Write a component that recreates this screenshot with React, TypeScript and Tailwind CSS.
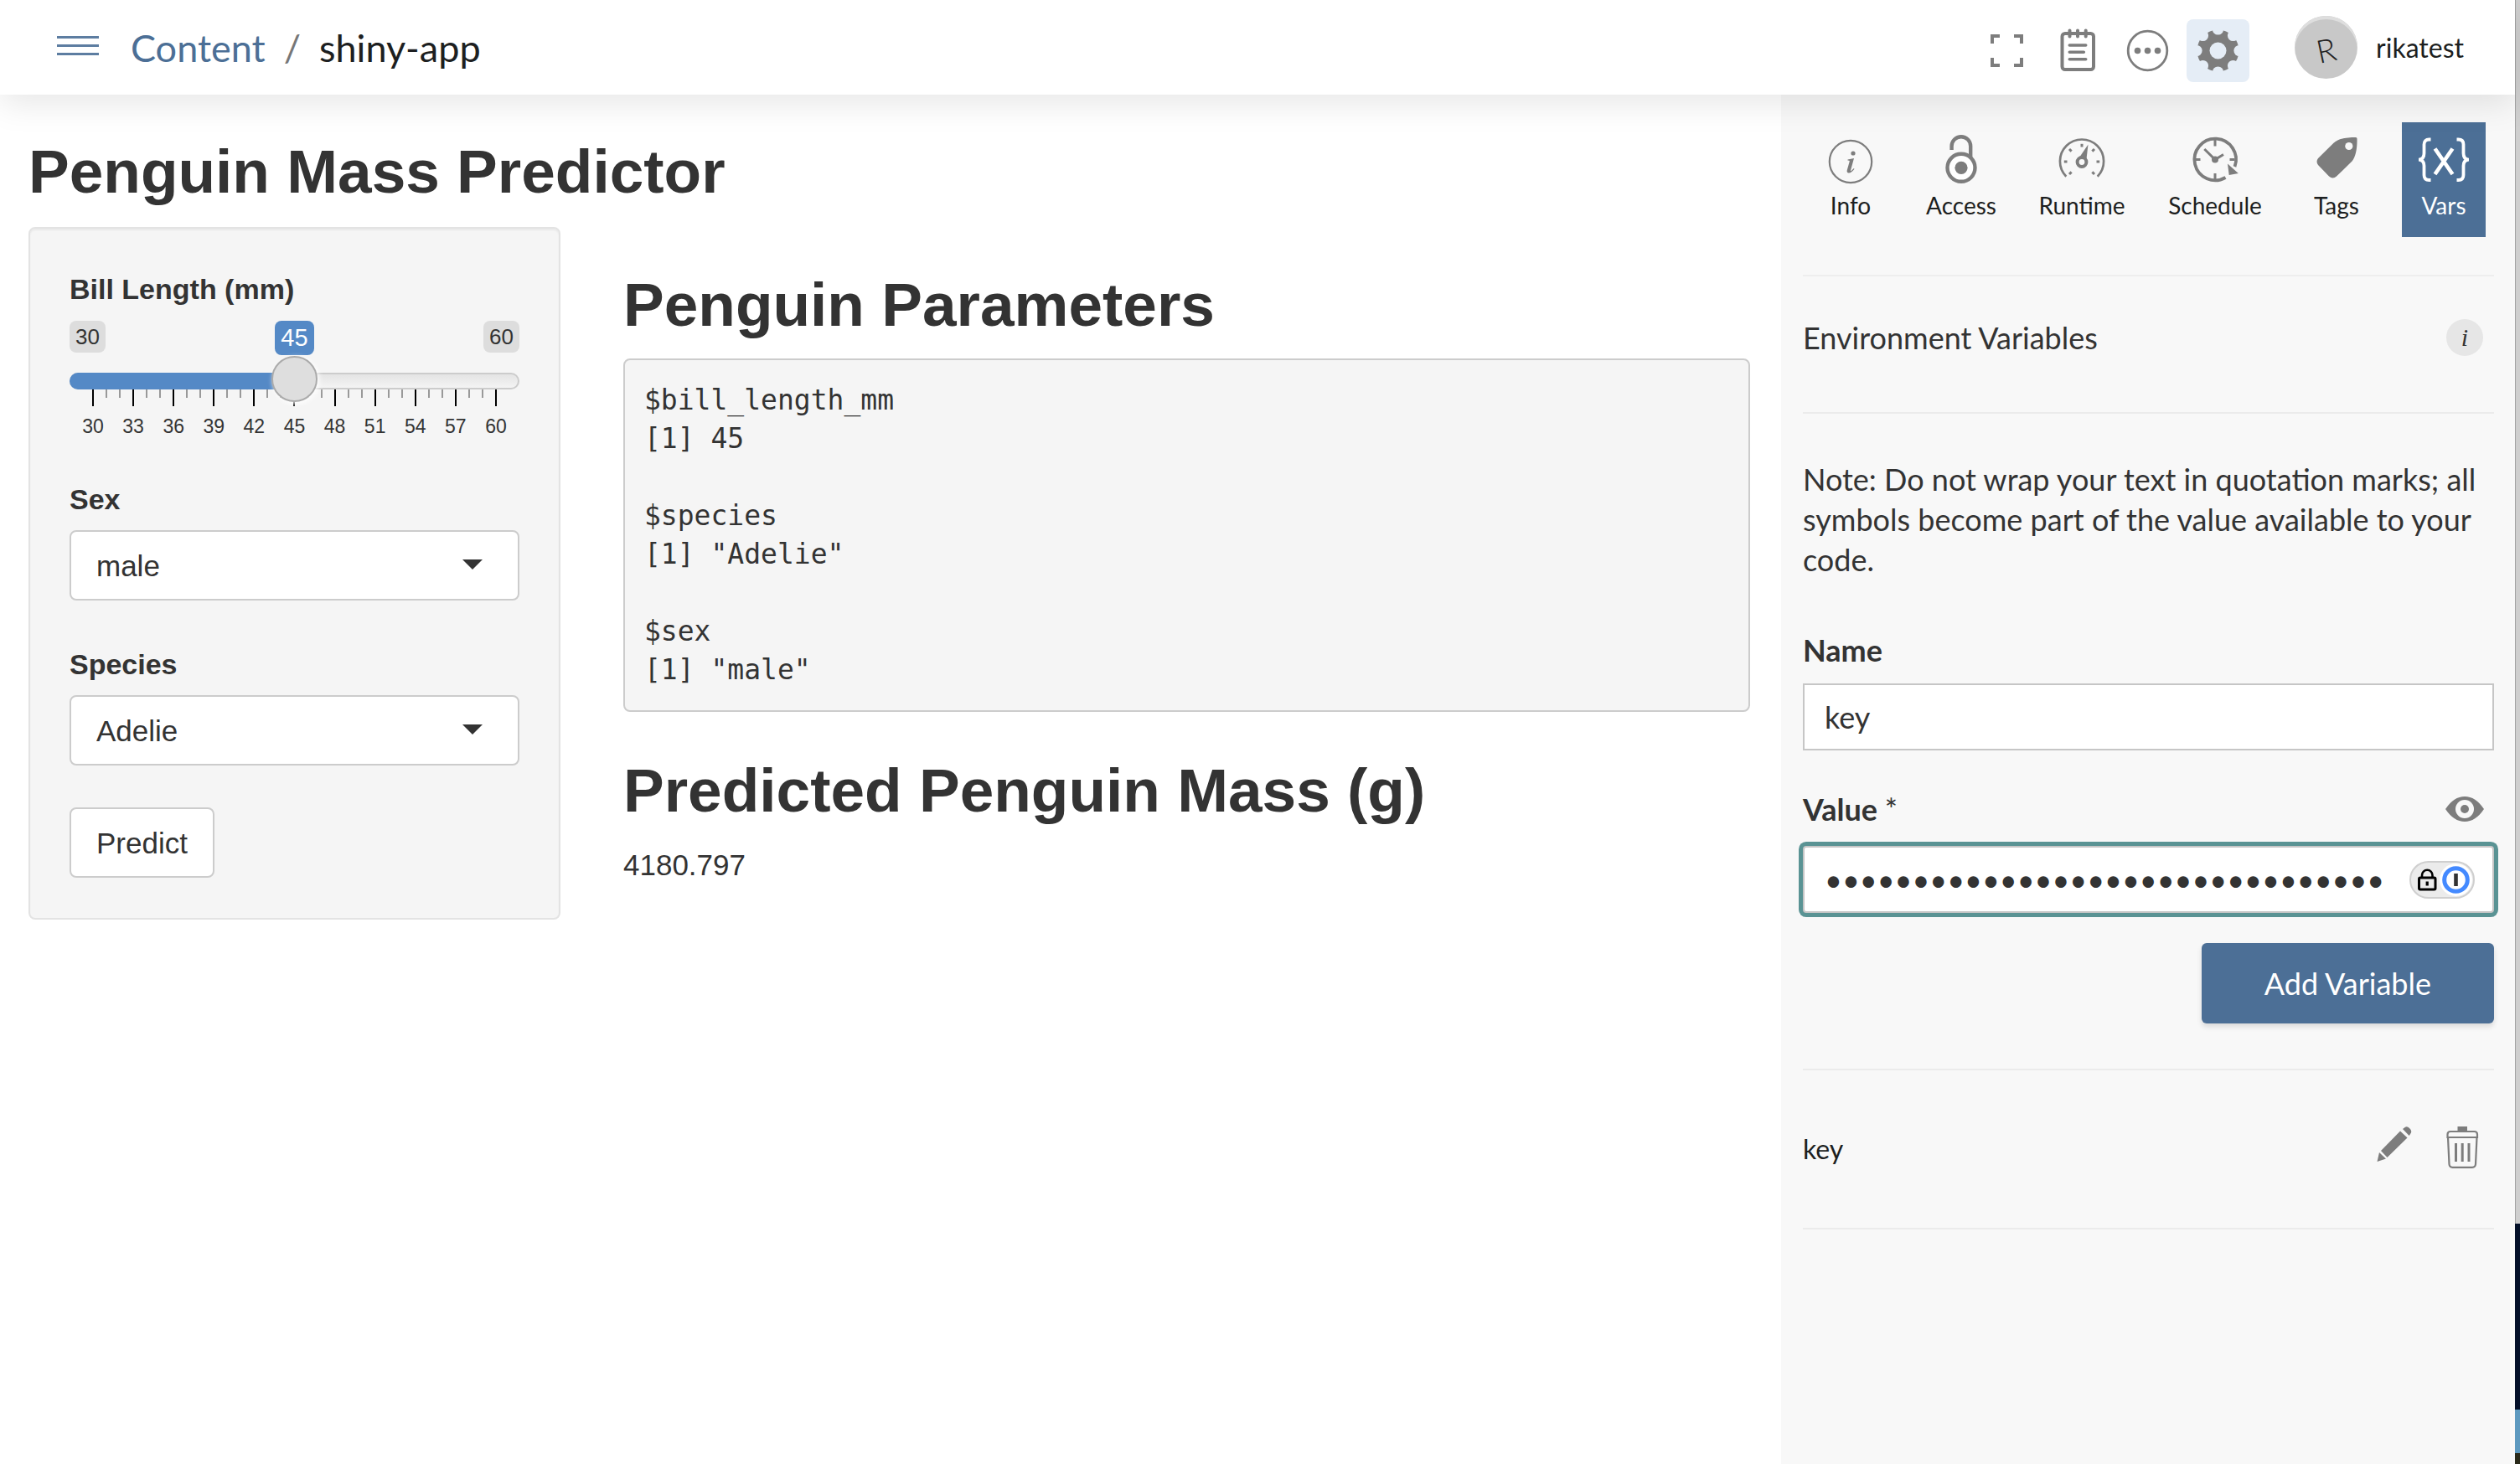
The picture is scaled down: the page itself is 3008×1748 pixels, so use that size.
import { useState, type ReactNode } from "react";

const TICKS = Array.from({ length: 31 }, (_, i) => i);
const TICK_LABELS = [30, 33, 36, 39, 42, 45, 48, 51, 54, 57, 60];

const OUTPUT = `$bill_length_mm
[1] 45

$species
[1] "Adelie"

$sex
[1] "male"
`;

function ExpandIcon() {
  return (
    <svg viewBox="0 0 75 75" className="size-full" fill="none" stroke="#7d7d7d" strokeWidth="4" aria-hidden="true">
      <path d="M20 29V20H29M46 20H55V29M55 46V55H46M29 55H20V46" />
    </svg>
  );
}

function NotesIcon() {
  return (
    <svg viewBox="0 0 75 75" className="size-full" fill="none" stroke="#7d7d7d" strokeLinecap="round" aria-hidden="true">
      <rect x="19.500" y="17" width="37.500" height="43" rx="3.500" strokeWidth="4" />
      <path d="M28.500 13.500V20.500M38 13.500V20.500M47.700 13.500V20.500" strokeWidth="4" />
      <path d="M28.300 31H47.700M28.300 39.300H45.300M28.300 47.700H47.700" strokeWidth="3.600" />
    </svg>
  );
}

function MoreIcon() {
  return (
    <svg viewBox="0 0 75 75" className="size-full" fill="#7d7d7d" aria-hidden="true">
      <circle cx="37.500" cy="37.500" r="23.300" fill="none" stroke="#7d7d7d" strokeWidth="2.800" />
      <circle cx="25.500" cy="37.500" r="3.800" />
      <circle cx="37.500" cy="37.500" r="3.800" />
      <circle cx="49.500" cy="37.500" r="3.800" />
    </svg>
  );
}

function GearIcon() {
  return (
    <svg viewBox="0 0 75 75" className="size-full" aria-hidden="true">
      <mask id="gear-mask">
        <rect width="75" height="75" fill="white" />
        {[0, 45, 90, 135, 180, 225, 270, 315].map((a) => (
          <circle key={a} cx="37.500" cy="12" r="6.600" fill="black" transform={`rotate(${a} 37.500 37.500)`} />
        ))}
        <circle cx="37.500" cy="37.500" r="10" fill="black" />
      </mask>
      <circle cx="37.500" cy="37.500" r="25" fill="#7d7d7d" mask="url(#gear-mask)" />
    </svg>
  );
}

function InfoIcon() {
  return (
    <svg viewBox="0 0 60 60" className="size-[60px]" fill="#7d7d7d" aria-hidden="true">
      <circle cx="30" cy="32" r="25.200" fill="none" stroke="#7d7d7d" strokeWidth="2.200" />
      <circle cx="33" cy="22" r="2.600" />
      <path d="M26.500 29.500L34 28L30 42.500Q29.600 43.700 31 42.700L33.800 40L34.500 40.800Q31 45.500 27.800 45.500Q25 45.300 25.800 42L28.800 31.500Q29 30.500 26.500 30.500Z" />
    </svg>
  );
}

function AccessIcon() {
  return (
    <svg viewBox="0 0 60 60" className="size-[60px]" fill="none" stroke="#7d7d7d" strokeWidth="4.400" aria-hidden="true">
      <path d="M18.600 18V13.500A11.300 11.300 0 0 1 41.200 13.500V28" />
      <circle cx="30" cy="39.300" r="16.500" fill="white" />
      <circle cx="30" cy="39.300" r="7.600" fill="#7d7d7d" stroke="none" />
    </svg>
  );
}

function RuntimeIcon() {
  return (
    <svg viewBox="0 0 60 60" className="size-[60px]" fill="none" stroke="#7d7d7d" aria-hidden="true">
      <path d="M11.300 49.800A26.100 26.100 0 1 1 48.700 49.800" strokeWidth="2.700" />
      {[-135, -90, -45, 0, 45, 90, 135].map((a) => (
        <path key={a} d="M30 14.500V10.800" strokeWidth="3" transform={`rotate(${a} 30 32)`} />
      ))}
      <circle cx="30" cy="32.500" r="5.400" strokeWidth="4" />
      <path d="M27 27L37.500 11.500L35.500 29Z" fill="#7d7d7d" stroke="none" />
    </svg>
  );
}

function ScheduleIcon() {
  return (
    <svg viewBox="0 0 60 60" className="size-[60px]" fill="none" stroke="#7d7d7d" aria-hidden="true">
      <path d="M42.500 51A24.800 24.800 0 1 1 53.500 38" strokeWidth="3.800" />
      <path d="M30 6V13.500M30 46V53M7 29.500H12.500M47.500 29.500H53" strokeWidth="3" />
      <path d="M17.300 17L30 29.500L40 23.500" strokeWidth="3" />
      <circle cx="30" cy="29.500" r="4" fill="#7d7d7d" stroke="none" />
      <path d="M45 34.500L57.800 46L46.700 48Z" fill="#7d7d7d" stroke="none" />
    </svg>
  );
}

function TagsIcon() {
  return (
    <svg viewBox="0 0 60 60" className="size-[60px]" aria-hidden="true">
      <path
        d="M53 3C43 3 33 4 26.500 9.700L8 28Q5 32 8 36L21 49.500Q25.500 53.500 30 49.500L48.500 31.500C53 26 54.800 16 54.500 4.500Q54.500 3 53 3Z"
        fill="#7d7d7d"
      />
      <circle cx="44.800" cy="13.500" r="4.600" fill="#f8f8f8" />
    </svg>
  );
}

function VarsIcon() {
  return (
    <svg viewBox="0 0 60 60" className="size-[60px]" fill="none" stroke="white" strokeWidth="3.800" aria-hidden="true">
      <path d="M14.500 5.500H12.500Q6.500 5.500 6.500 11.500V22Q6.500 29.500 0 29.700Q6.500 30 6.500 37V48Q6.500 54 12.500 54H14.500" />
      <path d="M45.500 5.500H47.500Q53.500 5.500 53.500 11.500V22Q53.500 29.500 60 29.700Q53.500 30 53.500 37V48Q53.500 54 47.500 54H45.500" />
      <path d="M19.500 16.500L40.500 47M40.500 16.500L19.500 47" strokeWidth="4.600" />
    </svg>
  );
}

function EyeIcon() {
  return (
    <svg viewBox="0 0 46 30" className="h-[30px] w-[46px]" aria-hidden="true">
      <path d="M0 15Q10 0 23 0Q36 0 46 15Q36 30 23 30Q10 30 0 15Z" fill="#7d7d7d" />
      <circle cx="23" cy="15" r="11" fill="#f8f8f8" />
      <circle cx="23" cy="15" r="5" fill="#7d7d7d" />
    </svg>
  );
}

function PencilIcon() {
  return (
    <svg viewBox="0 0 42 42" className="size-[42px]" fill="#7d7d7d" aria-hidden="true">
      <path d="M28 5.500L36.500 13.500L12.500 37L5 29Z" />
      <path d="M3 31L11 38.500L0.500 42Z" />
      <path d="M31 3L34 0.800Q36.500 -0.500 39 2Q42 4.500 41 7.500L38.700 11Z" />
    </svg>
  );
}

function TrashIcon() {
  return (
    <svg viewBox="0 0 40 50" className="h-[50px] w-[40px]" fill="none" stroke="#7d7d7d" strokeWidth="2.200" aria-hidden="true">
      <rect x="14.500" y="0" width="11.500" height="6" fill="#7d7d7d" stroke="none" />
      <path d="M2.500 13V9.500Q2.500 6 6 6H34.500Q38 6 38 9.500V13Z" />
      <path d="M3 13L4.500 45Q4.800 48.800 8.500 48.800H32Q35.700 48.800 36 45L37.500 13" />
      <path d="M12.500 20V42M20.200 20V42M28 20V42" strokeWidth="3" />
    </svg>
  );
}

function PasswordBadge() {
  return (
    <svg viewBox="0 0 78 45" className="h-[45px] w-[78px]" fill="none" aria-hidden="true">
      <rect x="1" y="1" width="76" height="43" rx="21.500" fill="#ebebeb" stroke="#cfcfcf" strokeWidth="2" />
      <circle cx="55.500" cy="22.500" r="19.500" fill="white" />
      <circle cx="55.500" cy="22.500" r="13.800" stroke="#448aff" strokeWidth="5" />
      <rect x="53.200" y="15" width="4.600" height="15" fill="#333333" />
      <rect x="11.500" y="20" width="19.500" height="14" rx="1.500" stroke="black" strokeWidth="3" />
      <path d="M15 20V17A6.200 6.200 0 0 1 27.500 17V20" stroke="black" strokeWidth="2.600" />
      <path d="M21.200 24.500V29.500" stroke="black" strokeWidth="3.200" />
    </svg>
  );
}

function ToolButton({ label, active, children }: { label: string; active?: boolean; children: ReactNode }) {
  return (
    <button
      type="button"
      aria-label={label}
      className={active ? "size-[75px] rounded-lg bg-[#e5edf6]" : "size-[75px] rounded-lg"}
    >
      {children}
    </button>
  );
}

function Header() {
  return (
    <header className="relative z-10 flex h-[113px] items-center bg-white pr-[61px] pl-[68px] font-['Lato',sans-serif] shadow-[0_10px_40px_rgba(0,0,0,0.1)]">
      <button type="button" aria-label="Menu" className="mb-[4px] flex w-[50px] flex-col gap-[7px]">
        <span className="h-[3px] w-full bg-[#5d7da1]" />
        <span className="h-[3px] w-full bg-[#5d7da1]" />
        <span className="h-[3px] w-full bg-[#5d7da1]" />
      </button>
      <nav aria-label="Breadcrumb" className="ml-[38px] flex items-center text-[45px] leading-[56px]">
        <a href="#content" className="text-[#4c6f96]">
          Content
        </a>
        <span className="mx-[22px] text-[#777777]">/</span>
        <span className="text-[#1d1f21]">shiny-app</span>
      </nav>
      <div className="mt-[8px] ml-auto flex gap-[9px]">
        <ToolButton label="Full screen">
          <ExpandIcon />
        </ToolButton>
        <ToolButton label="Logs">
          <NotesIcon />
        </ToolButton>
        <ToolButton label="More">
          <MoreIcon />
        </ToolButton>
        <ToolButton label="Settings" active>
          <GearIcon />
        </ToolButton>
      </div>
      <button type="button" className="ml-[54px] flex items-center gap-[22px]">
        <span className="flex size-[75px] items-center justify-center rounded-full bg-[#c8c8c8] pt-[6px] text-[38px] font-light text-[#222222] shadow-[inset_0_4px_0_#dedede]">
          <span className="-rotate-12">R</span>
        </span>
        <span className="text-[32px] leading-[40px] text-[#1d1f21]">rikatest</span>
      </button>
    </header>
  );
}

function BillLengthSlider() {
  const [value, setValue] = useState(45);
  const percent = ((value - 30) / 30) * 100;
  return (
    <div>
      <label htmlFor="bill-length" className="block text-[34px] leading-[48px] font-bold">
        Bill Length (mm)
      </label>
      <div className="mt-[14px] flex h-[41px] items-start justify-between leading-[38px]">
        <span className="rounded-lg bg-[#dddddd] px-[7px] text-[26px]">30</span>
        <output className="rounded-lg bg-[#5489c6] px-[7px] text-[29px] leading-[41px] text-white">{value}</output>
        <span className="rounded-lg bg-[#dddddd] px-[7px] text-[26px]">60</span>
      </div>
      <div className="relative mt-[21px]">
        <div className="h-5 overflow-hidden rounded-full border-2 border-[#cccccc] bg-linear-to-b from-[#e4e4e4] to-[#f4f4f4]" />
        <div className="absolute top-0 left-0 h-5 rounded-l-full bg-[#5489c6]" style={{ width: `${percent}%` }} />
        <input
          id="bill-length"
          type="range"
          min={30}
          max={60}
          value={value}
          onChange={(e) => setValue(Number(e.target.value))}
          className="absolute inset-x-0 -top-5 h-[55px] w-full appearance-none bg-transparent [&::-webkit-slider-thumb]:size-[55px] [&::-webkit-slider-thumb]:appearance-none [&::-webkit-slider-thumb]:rounded-full [&::-webkit-slider-thumb]:border-2 [&::-webkit-slider-thumb]:border-[#ababab] [&::-webkit-slider-thumb]:bg-[#dedede] [&::-webkit-slider-thumb]:shadow-[2px_2px_6px_rgba(255,255,255,1)]"
        />
        <div className="flex h-5 items-start justify-between px-[27px]">
          {TICKS.map((t) => (
            <span key={t} className={t % 3 === 0 ? "h-5 w-[2px] bg-black" : "h-[10px] w-[2px] bg-[#999999]"} />
          ))}
        </div>
      </div>
      <div className="mt-[9px] flex justify-between px-[4px] text-[23px] leading-[30px]">
        {TICK_LABELS.map((n) => (
          <span key={n} className="w-[48px] text-center">
            {n}
          </span>
        ))}
      </div>
    </div>
  );
}

function SelectField({ id, label, options }: { id: string; label: string; options: string[] }) {
  return (
    <div>
      <label htmlFor={id} className="block text-[34px] leading-[48px] font-bold">
        {label}
      </label>
      <div className="relative mt-[13px]">
        <select
          id={id}
          defaultValue={options[0]}
          className="block h-[84px] w-full appearance-none rounded-lg border-2 border-[#cccccc] bg-white px-[30px] pt-[2px] text-[35px]"
        >
          {options.map((o) => (
            <option key={o}>{o}</option>
          ))}
        </select>
        <svg viewBox="0 0 24 12" className="pointer-events-none absolute top-[35px] right-[44px] h-[12px] w-[24px]" aria-hidden="true">
          <path d="M0 0H24L12 12Z" fill="#333333" />
        </svg>
      </div>
    </div>
  );
}

function PredictorApp() {
  return (
    <main className="min-w-0 flex-1 bg-white pt-[52px] pr-[37px] pl-[34px] font-['Liberation_Sans',Arial,sans-serif] text-[#333333]">
      <h1 className="text-[73px] leading-[80px] font-bold">Penguin Mass Predictor</h1>
      <div className="mt-[26px] flex items-start gap-[75px]">
        <form
          onSubmit={(e) => e.preventDefault()}
          className="w-[635px] shrink-0 rounded-lg border-2 border-[#e3e3e3] bg-[#f5f5f5] px-[47px] pt-[48px] pb-[48px] shadow-[inset_0_2px_2px_rgba(0,0,0,0.05)]"
        >
          <BillLengthSlider />
          <div className="mt-[48px]">
            <SelectField id="sex" label="Sex" options={["male", "female"]} />
          </div>
          <div className="mt-[52px]">
            <SelectField id="species" label="Species" options={["Adelie", "Chinstrap", "Gentoo"]} />
          </div>
          <button type="submit" className="mt-[50px] block h-[84px] rounded-lg border-2 border-[#cccccc] bg-white px-[30px] pt-[2px] text-[35px]">
            Predict
          </button>
        </form>
        <section className="min-w-0 flex-1 pt-[53px]">
          <h2 className="text-[73px] leading-[80px] font-bold">Penguin Parameters</h2>
          <pre className="mt-[24px] rounded-lg border-2 border-[#cccccc] bg-[#f5f5f5] px-[23px] py-[25px] font-['DejaVu_Sans_Mono',monospace] text-[33px] leading-[46px]">
            {OUTPUT}
          </pre>
          <h2 className="mt-[54px] text-[73px] leading-[80px] font-bold">Predicted Penguin Mass (g)</h2>
          <p className="mt-[24px] text-[35px] leading-[50px]">4180.797</p>
        </section>
      </div>
    </main>
  );
}

function Tab({ label, active, children }: { label: string; active?: boolean; children: ReactNode }) {
  return (
    <button
      type="button"
      role="tab"
      aria-selected={!!active}
      className={
        active
          ? "flex h-[137px] min-w-[100px] flex-col items-center justify-self-center bg-[#4c6f96] pt-[15px] text-white"
          : "flex h-[137px] min-w-[100px] flex-col items-center justify-self-center pt-[15px] text-[#1d1f21]"
      }
    >
      {children}
      <span className="mt-[6px] text-[28px] leading-[36px]">{label}</span>
    </button>
  );
}

function SettingsPanel() {
  return (
    <aside className="w-[876px] shrink-0 bg-[#f8f8f8] pt-[33px] font-['Lato',sans-serif] text-[#333333]">
      <div role="tablist" className="grid grid-cols-[132fr_132fr_156fr_162fr_128fr_128fr] pr-[21px] pl-[17px]">
        <Tab label="Info">
          <InfoIcon />
        </Tab>
        <Tab label="Access">
          <AccessIcon />
        </Tab>
        <Tab label="Runtime">
          <RuntimeIcon />
        </Tab>
        <Tab label="Schedule">
          <ScheduleIcon />
        </Tab>
        <Tab label="Tags">
          <TagsIcon />
        </Tab>
        <Tab label="Vars" active>
          <VarsIcon />
        </Tab>
      </div>
      <div className="mt-[45px] mr-[25px] ml-[26px] text-[36px] leading-[48px]">
        <div className="flex items-center justify-between border-t-2 border-[#eeeeee] pt-[49px] pr-[13px] pb-[65px]">
          <h2>Environment Variables</h2>
          <button
            type="button"
            aria-label="About environment variables"
            className="flex size-[44px] items-center justify-center rounded-full bg-[#e6e6e6] font-['Liberation_Serif',serif] text-[30px] text-[#333333] italic"
          >
            i
          </button>
        </div>
        <p className="border-t-2 border-[#ebebeb] pt-[54px]">
          Note: Do not wrap your text in quotation marks; all symbols become part of the value available to your code.
        </p>
        <form onSubmit={(e) => e.preventDefault()}>
          <label htmlFor="var-name" className="mt-[60px] block font-bold">
            Name
          </label>
          <input
            id="var-name"
            type="text"
            defaultValue="key"
            className="mt-[16px] block h-[80px] w-full border-2 border-[#c6c6c6] bg-white px-[24px]"
          />
          <div className="mt-[46px] flex items-center justify-between pr-[12px]">
            <label htmlFor="var-value" className="font-bold">
              Value <span className="font-normal">*</span>
            </label>
            <button type="button" aria-label="Show value">
              <EyeIcon />
            </button>
          </div>
          <div className="relative mt-[20px]">
            <input
              id="var-value"
              type="password"
              defaultValue="abcdefghijklmnopqrstuvwxyz012345"
              className="block h-[80px] w-full rounded-sm border-2 border-[#c6c6c6] bg-white pr-[110px] pl-[24px] shadow-[0_0_0_5px_#5a9394] outline-none"
            />
            <div className="absolute top-[18px] right-[23px]">
              <PasswordBadge />
            </div>
          </div>
          <div className="mt-[36px] flex justify-end">
            <button type="submit" className="h-[96px] rounded-md bg-[#4c6f96] px-[75px] text-white shadow-[0_4px_6px_rgba(0,0,0,0.12)]">
              Add Variable
            </button>
          </div>
        </form>
        <div className="mt-[54px] flex h-[192px] items-center border-y-2 border-[#ebebeb] pr-[18px] text-[32px] text-[#1d1f21]">
          <span className="grow">key</span>
          <button type="button" aria-label="Edit key" className="mb-[12px]">
            <PencilIcon />
          </button>
          <button type="button" aria-label="Delete key" className="mb-[4px] ml-[40px]">
            <TrashIcon />
          </button>
        </div>
      </div>
    </aside>
  );
}

export default function App() {
  return (
    <div className="flex min-h-screen bg-white">
      <div className="flex min-w-0 flex-1 flex-col">
        <Header />
        <div className="flex flex-1">
          <PredictorApp />
          <SettingsPanel />
        </div>
      </div>
      <div className="flex w-[6px] shrink-0 flex-col" aria-hidden="true">
        <div className="flex-[1461] border-l border-[#a3a3a3] bg-[#cfcfcf]" />
        <div className="flex-[222] bg-[#041029]" />
        <div className="flex-[52] bg-[#5d99bf]" />
        <div className="flex-[13] bg-[#2a2a1a]" />
      </div>
    </div>
  );
}
